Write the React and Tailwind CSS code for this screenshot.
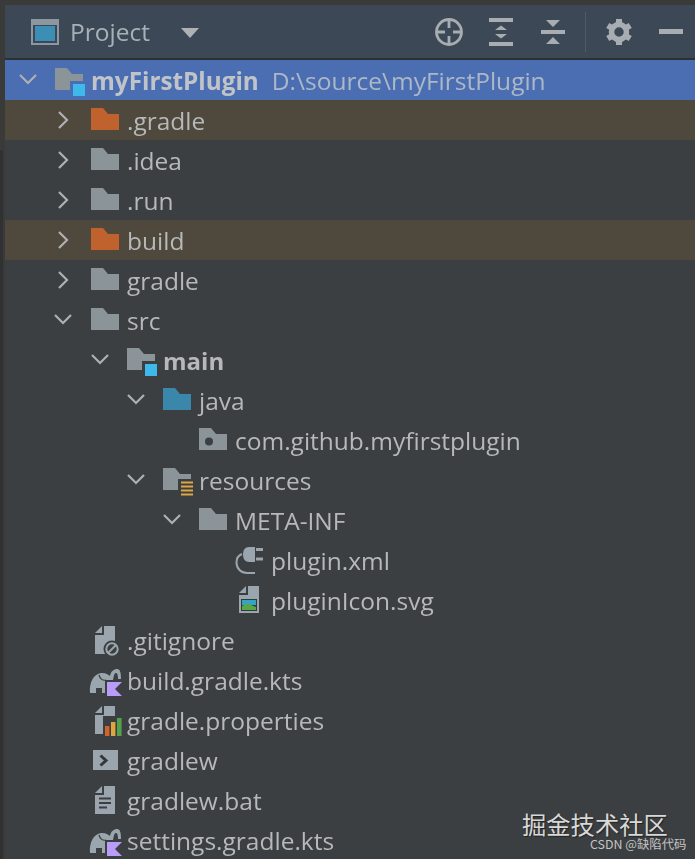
const G = "#9aa5ad";
const BG = "#3c3f41";

function Svg({ children }) {
  return (
    <svg width="36" height="40" viewBox="0 0 36 40" className="shrink-0 overflow-visible">
      {children}
    </svg>
  );
}

const folder = "M0 8H12L17 14H28V30H0Z";

function Folder({ color = "#8a9499", children }) {
  return (
    <Svg>
      <path d={folder} fill={color} />
      {children}
    </Svg>
  );
}

function ModuleFolder({ bg = BG }) {
  return (
    <Folder>
      <rect x="15" y="21" width="17" height="18" fill={bg} />
      <rect x="18" y="24" width="12" height="12" fill="#3fb8ec" />
    </Folder>
  );
}

function Package() {
  return (
    <Folder>
      <circle cx="10" cy="21.5" r="4" fill={BG} />
    </Folder>
  );
}

function Resources() {
  return (
    <Folder>
      <rect x="15" y="19" width="18" height="19" fill={BG} />
      <path d="M18 22.5H30M18 26.5H30M18 30.5H30M18 34.5H30" stroke="#dca742" strokeWidth="2" />
    </Folder>
  );
}

function Doc({ children }) {
  return (
    <Svg>
      <path d="M13 6H24V34H4V15H13Z" fill={G} />
      <path d="M4 13L11 6V13Z" fill={G} />
      {children}
    </Svg>
  );
}

function PluginXml() {
  return (
    <Svg>
      <path d="M20 7H14C10 7 8 10 8 14.5C8 19 10 22 14 22H20Z" fill={G} />
      <path d="M21 9.5H28M21 19H28" stroke={G} strokeWidth="3" />
      <path d="M7 14C3 15.5 1.5 18.5 1.5 22.5C1.5 28.5 6 33 12 33H20" fill="none" stroke={G} strokeWidth="2" />
    </Svg>
  );
}

function PluginIcon() {
  return (
    <Svg>
      <path d="M13 6H24V17H4V15H13Z" fill={G} />
      <path d="M4 13L11 6V13Z" fill={G} />
      <rect x="4" y="17" width="20" height="16" fill={G} />
      <rect x="6" y="19" width="16" height="12" fill="#2f3b40" />
      <rect x="7" y="20" width="14" height="5" fill="#35a4c4" />
      <path d="M7 30V26L12 23.5L21 27V30Z" fill="#5aa845" />
    </Svg>
  );
}

function GitIgnore() {
  return (
    <Doc>
      <circle cx="21" cy="29" r="8.5" fill={BG} />
      <circle cx="21" cy="29" r="5.7" fill="none" stroke={G} strokeWidth="2" />
      <path d="M17 33L25 25" stroke={G} strokeWidth="2" />
    </Doc>
  );
}

function GradleKts() {
  return (
    <Svg>
      <path
        d="M-1 33C-2 22 3 14 10 13C14 12.5 17 14 19 16C20 11 23 9 26 9C29 9 30 12 30 19H27C27 14 26 13 25 13C23 13 23 16 22 20L21 25H16V33H11V28H5V33Z"
        fill={G}
      />
      <path d="M8 15C9 19 12 21 15 20" fill="none" stroke={BG} strokeWidth="1.2" />
      <path d="M14 20H33L25.5 28.5L33 38H14Z" fill={BG} />
      <path d="M16 22H31L24 29L31 36H16Z" fill="#b99bf8" />
    </Svg>
  );
}

function Properties() {
  return (
    <Doc>
      <rect x="12" y="16" width="20" height="22" fill={BG} />
      <rect x="14" y="26" width="4.4" height="10" fill="#d0652b" />
      <rect x="20" y="22" width="4.4" height="14" fill="#dfa53f" />
      <rect x="26" y="18" width="4.6" height="18" fill="#55a04d" />
    </Doc>
  );
}

function Terminal() {
  return (
    <Svg>
      <rect x="2" y="10" width="25" height="20" fill={G} />
      <path d="M9.5 15.5L15 20.5L9.5 25.5" fill="none" stroke="#34393d" strokeWidth="3" />
    </Svg>
  );
}

function Bat() {
  return (
    <Doc>
      <path d="M8 18.5H20M8 23H20M8 27.5H16" stroke={BG} strokeWidth="1.8" />
    </Doc>
  );
}

function Chevron({ open }) {
  return (
    <svg width="36" height="40" viewBox="0 0 36 40" className="shrink-0">
      {open ? (
        <path d="M10 15L18 23L26 15" fill="none" stroke="#aeb0b2" strokeWidth="2.2" />
      ) : (
        <path d="M14 12L22 20L14 28" fill="none" stroke="#aeb0b2" strokeWidth="2.2" />
      )}
    </svg>
  );
}

function Row({ pad, open, icon, bg = "", gap = "ml-[9px]", children }) {
  return (
    <div className={`flex h-10 items-center text-[24.5px] whitespace-nowrap text-[#b6b8ba] ${pad} ${bg}`}>
      {open === undefined ? <div className="w-9 shrink-0" /> : <Chevron open={open} />}
      <div className={`shrink-0 ${gap}`}>{icon}</div>
      <span className="pt-0.5 leading-[38px]">{children}</span>
    </div>
  );
}

const excluded = "bg-[#4f483c]";

function HeaderIcons() {
  return (
    <div className="ml-auto flex items-center">
      <svg width="28" height="28" viewBox="0 0 28 28" className="mr-[26px]">
        <circle cx="14" cy="14" r="12.5" fill="none" stroke="#a8adb2" strokeWidth="2.8" />
        <path d="M14 2V10M14 18V26M2 14H10M18 14H26" stroke="#a8adb2" strokeWidth="2.8" />
      </svg>
      <svg width="24" height="30" viewBox="0 0 24 30" className="mr-7">
        <path d="M0 3H24M0 27H24" stroke="#a8adb2" strokeWidth="4" />
        <path d="M12 8.5L18 13H6ZM12 21.5L18 17H6Z" fill="#a8adb2" />
      </svg>
      <svg width="24" height="30" viewBox="0 0 24 30" className="mr-5">
        <path d="M0 15H24" stroke="#a8adb2" strokeWidth="4" />
        <path d="M5 3H19L12 10ZM5 27H19L12 20Z" fill="#a8adb2" />
      </svg>
      <div className="mr-[19px] h-10 w-px bg-[#505a66]" />
      <svg width="28" height="28" viewBox="0 0 28 28" className="mr-[26px]">
        <circle cx="14" cy="14" r="7.5" fill="none" stroke="#a8adb2" strokeWidth="5.5" />
        {[0, 60, 120, 180, 240, 300].map((a) => (
          <rect key={a} x="11" y="1" width="6" height="5" fill="#a8adb2" transform={`rotate(${a} 14 14)`} />
        ))}
      </svg>
      <div className="mr-3 h-[5px] w-6 bg-[#a8adb2]" />
    </div>
  );
}

export default function App() {
  return (
    <div className="relative h-[859px] w-[695px] overflow-hidden bg-[#3a3b39] font-['Open_Sans','Noto_Sans',sans-serif]">
      <div className="h-[5px]" />
      <div className="flex h-[854px]">
        <div className="flex w-[5px] shrink-0 flex-col">
          <div className="h-[145px]" />
          <div className="w-[3px] flex-1 bg-[#2f3133]" />
        </div>
        <div className="min-w-0 flex-1 blur-[0.4px]">
          <div className="flex h-[53px] items-center bg-[#3d4856] pl-[26px]">
            <svg width="28" height="26" viewBox="0 0 28 26" className="shrink-0">
              <rect x="1" y="1" width="26" height="24" fill="#3d4856" stroke="#8d979f" strokeWidth="2" />
              <rect x="2" y="2" width="24" height="4" fill="#8d979f" />
              <rect x="4" y="7" width="20" height="15" fill="#3b8fb5" />
            </svg>
            <span className="ml-[11px] pt-0.5 text-[24.5px] text-[#a9b1b8]">Project</span>
            <svg width="18" height="10" viewBox="0 0 18 10" className="ml-[31px] mt-0.5 shrink-0">
              <path d="M0 0H18L9 10Z" fill="#afb2b5" />
            </svg>
            <HeaderIcons />
          </div>
          <div className="h-0.5 bg-[#2c2f33]" />
          <div className="bg-[#3c3f41]">
            <div className="flex h-10 items-center bg-[#4b6eb3] pl-[5px] whitespace-nowrap">
              <Chevron open />
              <div className="ml-[9px] shrink-0">
                <ModuleFolder bg="#4b6eb3" />
              </div>
              <span className="pt-0.5 text-[24.3px] font-bold text-[#c0c4c8]">myFirstPlugin</span>
              <span className="ml-[13px] pt-0.5 text-[24.5px] text-[#adb8c6]">D:\source\myFirstPlugin</span>
            </div>
            <Row pad="pl-10" gap="ml-2.5" open={false} bg={excluded} icon={<Folder color="#c0622d" />}>.gradle</Row>
            <Row pad="pl-10" gap="ml-2.5" open={false} icon={<Folder />}>.idea</Row>
            <Row pad="pl-10" gap="ml-2.5" open={false} icon={<Folder />}>.run</Row>
            <Row pad="pl-10" gap="ml-2.5" open={false} bg={excluded} icon={<Folder color="#c0622d" />}>build</Row>
            <Row pad="pl-10" gap="ml-2.5" open={false} icon={<Folder />}>gradle</Row>
            <Row pad="pl-10" gap="ml-2.5" open icon={<Folder />}>src</Row>
            <Row pad="pl-[77px]" open icon={<ModuleFolder />}>
              <span className="text-[24px] font-bold">main</span>
            </Row>
            <Row pad="pl-[113px]" open icon={<Folder color="#3b87ab" />}>java</Row>
            <Row pad="pl-[149px]" icon={<Package />}>com.github.myfirstplugin</Row>
            <Row pad="pl-[113px]" open icon={<Resources />}>resources</Row>
            <Row pad="pl-[149px]" open icon={<Folder />}>META-INF</Row>
            <Row pad="pl-[185px]" icon={<PluginXml />}>plugin.xml</Row>
            <Row pad="pl-[185px]" icon={<PluginIcon />}>pluginIcon.svg</Row>
            <Row pad="pl-10" gap="ml-2.5" icon={<GitIgnore />}>.gitignore</Row>
            <Row pad="pl-10" gap="ml-2.5" icon={<GradleKts />}>build.gradle.kts</Row>
            <Row pad="pl-10" gap="ml-2.5" icon={<Properties />}>gradle.properties</Row>
            <Row pad="pl-10" gap="ml-2.5" icon={<Terminal />}>gradlew</Row>
            <Row pad="pl-10" gap="ml-2.5" icon={<Bat />}>gradlew.bat</Row>
            <Row pad="pl-10" gap="ml-2.5" icon={<GradleKts />}>settings.gradle.kts</Row>
          </div>
        </div>
      </div>
      <div className="absolute top-[812px] left-[522px] font-['Noto_Sans_CJK_SC',sans-serif] text-[24.3px] leading-6 whitespace-nowrap text-[#d8d8d8] [text-shadow:1px_1px_1px_#222]">
        掘金技术社区
      </div>
      <div className="absolute top-[836px] left-[590px] font-['Noto_Sans_CJK_SC',sans-serif] text-[12.4px] leading-4 whitespace-nowrap text-[#c4c4c4]">
        CSDN @缺陷代码
      </div>
    </div>
  );
}
